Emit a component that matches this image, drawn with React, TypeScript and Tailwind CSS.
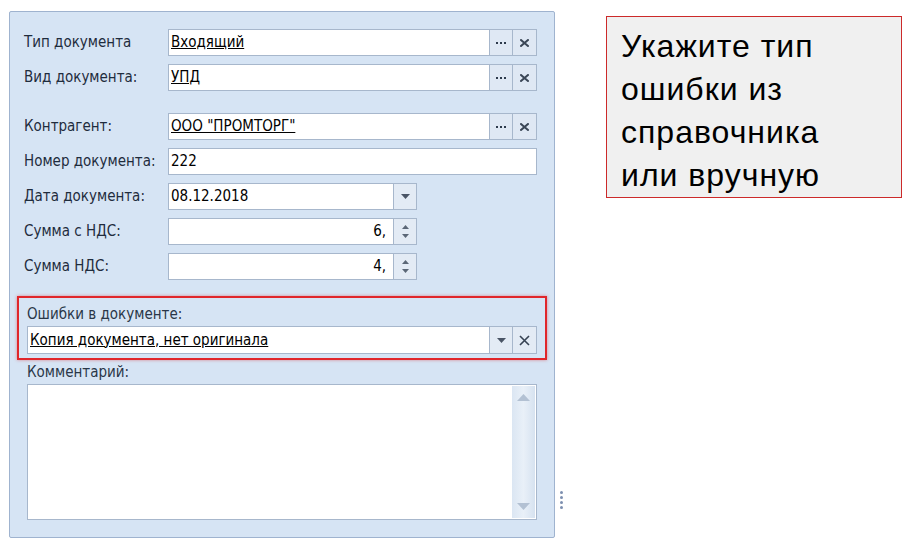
import React from 'react';

const labelFont = { fontFamily: "'DejaVu Sans Condensed', 'DejaVu Sans', sans-serif" };

function DotsButton() {
  return (
    <div className="w-[23px] h-full border-l border-[#a7b7cc] bg-[#dfe8f4] flex items-center justify-center gap-[2px]">
      <span className="w-[2px] h-[2px] bg-[#2d3a4c]" />
      <span className="w-[2px] h-[2px] bg-[#2d3a4c]" />
      <span className="w-[2px] h-[2px] bg-[#2d3a4c]" />
    </div>
  );
}

function ClearButton() {
  return (
    <div className="w-[24px] h-full border-l border-[#a7b7cc] bg-[#dfe8f4] flex items-center justify-center">
      <svg width="9" height="8" viewBox="0 0 9 8">
        <path d="M1 1 L8 7 M8 1 L1 7" stroke="#3b4757" strokeWidth="2" strokeLinecap="square" />
      </svg>
    </div>
  );
}

function DropButton() {
  return (
    <div className="w-[23px] h-full border-l border-[#a7b7cc] bg-[#e3ebf5] flex items-center justify-center">
      <svg width="9" height="5" viewBox="0 0 9 5">
        <path d="M0 0 H9 L4.5 5 Z" fill="#4a5566" />
      </svg>
    </div>
  );
}

function SpinButton() {
  return (
    <div className="w-[23px] h-full border-l border-[#a7b7cc] bg-[#e3ebf5] flex flex-col items-center justify-center gap-[5px]">
      <svg width="7" height="4" viewBox="0 0 7 4">
        <path d="M0 4 H7 L3.5 0 Z" fill="#5b6777" />
      </svg>
      <svg width="7" height="4" viewBox="0 0 7 4">
        <path d="M0 0 H7 L3.5 4 Z" fill="#5b6777" />
      </svg>
    </div>
  );
}

function Field({ children, className = '' }: { children: React.ReactNode; className?: string }) {
  return (
    <div className={`h-[27px] bg-white border border-[#a7b7cc] flex items-stretch ${className}`}>
      {children}
    </div>
  );
}

function Row({ label, children, className = '' }: { label: string; children: React.ReactNode; className?: string }) {
  return (
    <div className={`flex items-center pl-[14px] pr-[17px] ${className}`}>
      <div className="w-[144px] text-[15px] text-[#1f2c3d] whitespace-nowrap" style={labelFont}>
        {label}
      </div>
      <div className="flex-1">{children}</div>
    </div>
  );
}

export default function App() {
  return (
    <div className="w-[914px] h-[550px] bg-white relative flex">
      <div className="ml-[9px] mt-[11px] w-[546px] h-[527px] border border-[#9fb3cf] rounded-[2px] bg-[#d6e4f4] flex flex-col pt-[17px] relative">
        <Row label="Тип документа">
          <Field>
            <div className="flex-1 px-[2px] flex items-center text-[15px] text-black underline" style={labelFont}>Входящий</div>
            <DotsButton />
            <ClearButton />
          </Field>
        </Row>
        <Row label="Вид документа:" className="mt-[8px]">
          <Field>
            <div className="flex-1 px-[2px] flex items-center text-[15px] text-black underline" style={labelFont}>УПД</div>
            <DotsButton />
            <ClearButton />
          </Field>
        </Row>
        <Row label="Контрагент:" className="mt-[22px]">
          <Field>
            <div className="flex-1 px-[2px] flex items-center text-[15px] text-black underline" style={labelFont}>ООО "ПРОМТОРГ"</div>
            <DotsButton />
            <ClearButton />
          </Field>
        </Row>
        <Row label="Номер документа:" className="mt-[8px]">
          <Field>
            <div className="flex-1 px-[2px] flex items-center text-[15px] text-black" style={labelFont}>222</div>
          </Field>
        </Row>
        <Row label="Дата документа:" className="mt-[8px]">
          <Field className="w-[249px]">
            <div className="flex-1 px-[2px] flex items-center text-[15px] text-black" style={labelFont}>08.12.2018</div>
            <DropButton />
          </Field>
        </Row>
        <Row label="Сумма с НДС:" className="mt-[8px]">
          <Field className="w-[249px]">
            <div className="flex-1 pr-[7px] flex items-center justify-end text-[15px] text-black" style={labelFont}>6,</div>
            <SpinButton />
          </Field>
        </Row>
        <Row label="Сумма НДС:" className="mt-[8px]">
          <Field className="w-[249px]">
            <div className="flex-1 pr-[7px] flex items-center justify-end text-[15px] text-black" style={labelFont}>4,</div>
            <SpinButton />
          </Field>
        </Row>

        <div className="mx-[7px] mt-[16px] border-2 border-[#e0262b] shadow-[0_0_3px_rgba(224,38,43,0.5)] px-[8px] pt-[4px] pb-[4px]">
          <div className="h-[24px] flex items-center text-[15px] text-[#2a3748]" style={labelFont}>Ошибки в документе:</div>
          <Field className="h-[28px]">
            <div className="flex-1 px-[2px] flex items-center text-[15px] text-black underline" style={labelFont}>Копия документа, нет оригинала</div>
            <DropButton />
            <div className="w-[24px] h-full border-l border-[#a7b7cc] bg-[#e3ebf5] flex items-center justify-center">
              <svg width="11" height="11" viewBox="0 0 11 11">
                <path d="M1 1 L10 10 M10 1 L1 10" stroke="#374353" strokeWidth="1.6" />
              </svg>
            </div>
          </Field>
        </div>

        <div className="px-[17px] flex flex-col">
          <div className="h-[24px] flex items-center text-[15px] text-[#2a3748]" style={labelFont}>Комментарий:</div>
          <div className="h-[136px] bg-white border border-[#a7b7cc] flex justify-end p-[1px]">
            <div className="w-[23px] h-full bg-gradient-to-r from-[#dbe6f3] via-[#e9f0f8] to-[#d6e2f0] flex flex-col items-center justify-between py-[8px]">
              <svg width="13" height="7" viewBox="0 0 13 7">
                <path d="M0 7 H13 L6.5 0 Z" fill="#b3c1d3" />
              </svg>
              <svg width="13" height="7" viewBox="0 0 13 7">
                <path d="M0 0 H13 L6.5 7 Z" fill="#b3c1d3" />
              </svg>
            </div>
          </div>
        </div>

        <div className="absolute right-[-9px] bottom-[28px] flex flex-col gap-[2px]">
          <span className="w-[3px] h-[3px] rounded-full bg-[#7d8fb0]" />
          <span className="w-[3px] h-[3px] rounded-full bg-[#7d8fb0]" />
          <span className="w-[3px] h-[3px] rounded-full bg-[#7d8fb0]" />
          <span className="w-[3px] h-[3px] rounded-full bg-[#7d8fb0]" />
        </div>
      </div>

      <div
        className="ml-[51px] mt-[16px] w-[296px] h-[182px] border border-[#cc2a2a] bg-[#f0f0f0] pl-[14px] pt-[8px] text-[32px] leading-[43px] tracking-[1px] text-black"
        style={{ fontFamily: "'Liberation Sans', Arial, sans-serif" }}
      >
        Укажите тип<br />
        ошибки из<br />
        справочника<br />
        или вручную
      </div>
    </div>
  );
}
